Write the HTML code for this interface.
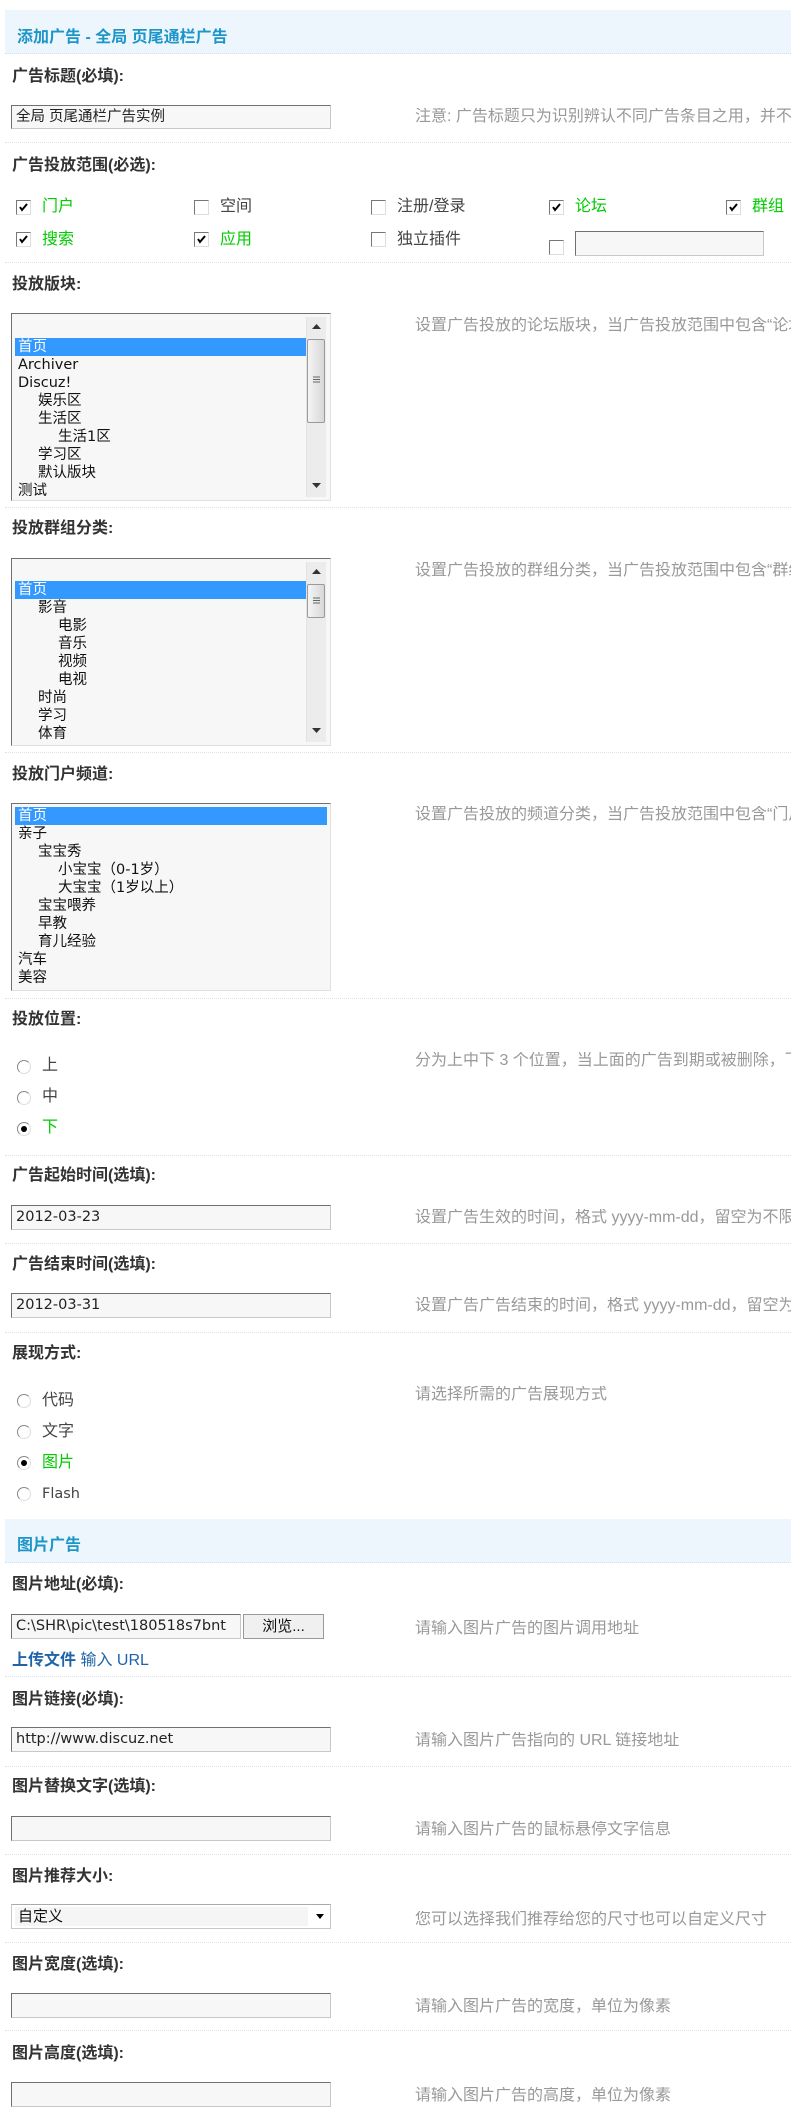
<!DOCTYPE html>
<html><head><meta charset="utf-8">
<style>
html,body{margin:0;padding:0;background:#fff;width:791px;height:2117px;overflow:hidden;position:relative}
body{font-family:"Liberation Sans","Noto Sans CJK SC",sans-serif;}
.a{position:absolute;white-space:nowrap}
.band{position:absolute;left:5px;right:0;background:#eef6fd;border-bottom:1px dotted #cfe0ee}
.band span{position:absolute;left:12px;font-size:16px;font-weight:bold;color:#1c95c9}
.sep{position:absolute;left:5px;right:0;height:0;border-top:1px dotted #d4e3ee}
.lb{position:absolute;left:12px;font-size:16px;font-weight:bold;color:#333;line-height:18px;white-space:nowrap}
.tip{position:absolute;left:415px;width:376px;overflow:hidden;font-size:16px;color:#999;line-height:18px;white-space:nowrap}
.in{position:absolute;left:11px;width:314px;height:23px;background:#f7f7f7;border:1px solid;border-color:#707070 #c8c8c8 #c8c8c8 #707070;font-family:"DejaVu Sans","Noto Sans CJK SC",sans-serif;font-size:14.5px;line-height:23px;color:#222;padding-left:4px;box-sizing:content-box;white-space:nowrap;overflow:hidden}
.lst{position:absolute;left:11px;width:318px;background:#f7f7f7;border:1px solid;border-color:#707070 #e0e0e0 #e0e0e0 #707070;overflow:hidden;font-family:"DejaVu Sans","Noto Sans CJK SC",sans-serif;font-size:14.5px;color:#111}
.it{position:absolute;height:18px;line-height:18px;white-space:nowrap}
.hl{background:#3399ff;color:#fff}
.sb{position:absolute;right:4px;width:19px;background:#ececec;border-left:1px solid #e4e4e4}
.th{position:absolute;left:0;width:18px;background:linear-gradient(90deg,#f4f4f4,#d8d8d8);border:1px solid #9a9a9a;border-radius:2px;box-sizing:border-box}
.cb{position:absolute;width:13px;height:13px;border:1px solid;border-color:#777 #ddd #ddd #777;background:#fff}
.rd{position:absolute;width:12px;height:12px;border-radius:50%;border:1px solid;border-color:#888 #ddd #ddd #888;background:#fff}
.rd.on::after{content:"";position:absolute;left:3px;top:3px;width:6px;height:6px;border-radius:50%;background:#000}
.o{font-size:16px;color:#444;line-height:18px}
.o.g{color:#00cc00}
</style></head><body>

<div class="band" style="top:10px;height:43px"><span style="top:13px">添加广告 - 全局 页尾通栏广告</span></div>

<div class="lb" style="top:68px">广告标题(必填):</div>
<div class="in" style="top:105px;height:22px;line-height:22px;font-size:14.5px;font-family:'Liberation Sans','Noto Sans CJK SC',sans-serif">全局 页尾通栏广告实例</div>
<div class="tip" style="top:108px">注意: 广告标题只为识别辨认不同广告条目之用，并不在广告中显示</div>
<div class="sep" style="top:142px"></div>

<div class="lb" style="top:157px">广告投放范围(必选):</div>
<div class="cb" style="left:16px;top:200px"><svg width="13" height="13"><path d="M3 6 L5 9 L10 3" stroke="#000" stroke-width="2" fill="none"/></svg></div>
<div class="a o g" style="left:42px;top:198px">门户</div>
<div class="cb" style="left:194px;top:200px"></div>
<div class="a o" style="left:220px;top:198px">空间</div>
<div class="cb" style="left:371px;top:200px"></div>
<div class="a o" style="left:397px;top:198px">注册/登录</div>
<div class="cb" style="left:549px;top:200px"><svg width="13" height="13"><path d="M3 6 L5 9 L10 3" stroke="#000" stroke-width="2" fill="none"/></svg></div>
<div class="a o g" style="left:575px;top:198px">论坛</div>
<div class="cb" style="left:726px;top:200px"><svg width="13" height="13"><path d="M3 6 L5 9 L10 3" stroke="#000" stroke-width="2" fill="none"/></svg></div>
<div class="a o g" style="left:752px;top:198px">群组</div>
<div class="cb" style="left:16px;top:232px"><svg width="13" height="13"><path d="M3 6 L5 9 L10 3" stroke="#000" stroke-width="2" fill="none"/></svg></div>
<div class="a o g" style="left:42px;top:231px">搜索</div>
<div class="cb" style="left:194px;top:232px"><svg width="13" height="13"><path d="M3 6 L5 9 L10 3" stroke="#000" stroke-width="2" fill="none"/></svg></div>
<div class="a o g" style="left:220px;top:231px">应用</div>
<div class="cb" style="left:371px;top:232px"></div>
<div class="a o" style="left:397px;top:231px">独立插件</div>
<div class="cb" style="left:549px;top:240px"></div>
<div class="in" style="left:575px;top:231px;width:183px;height:23px"></div>
<div class="sep" style="top:262px"></div>

<div class="lb" style="top:276px">投放版块:</div>
<div class="lst" style="top:313px;height:186px">
 <div class="it hl" style="left:3px;top:24px;width:292px;padding-left:3px;box-sizing:border-box">首页</div>
 <div class="it" style="left:6px;top:42px">Archiver</div>
 <div class="it" style="left:6px;top:60px">Discuz!</div>
 <div class="it" style="left:26px;top:78px">娱乐区</div>
 <div class="it" style="left:26px;top:96px">生活区</div>
 <div class="it" style="left:46px;top:114px">生活1区</div>
 <div class="it" style="left:26px;top:132px">学习区</div>
 <div class="it" style="left:26px;top:150px">默认版块</div>
 <div class="it" style="left:6px;top:168px">测试</div>
 <div class="sb" style="top:3px;height:180px">
  <svg class="a" style="left:5px;top:7px" width="9" height="6"><path d="M0 5 L4.5 0 L9 5Z" fill="#333"/></svg>
  <div class="th" style="top:22px;height:84px"><svg class="a" style="left:5px;top:36px" width="7" height="8"><path d="M0 1H7M0 3.5H7M0 6H7" stroke="#666"/></svg></div>
  <svg class="a" style="left:5px;top:166px" width="9" height="6"><path d="M0 0 L4.5 5 L9 0Z" fill="#333"/></svg>
 </div>
</div>
<div class="tip" style="top:317px">设置广告投放的论坛版块，当广告投放范围中包含“论坛”时有效</div>
<div class="sep" style="top:507px"></div>

<div class="lb" style="top:520px">投放群组分类:</div>
<div class="lst" style="top:558px;height:186px">
 <div class="it hl" style="left:3px;top:22px;width:292px;padding-left:3px;box-sizing:border-box">首页</div>
 <div class="it" style="left:26px;top:40px">影音</div>
 <div class="it" style="left:46px;top:58px">电影</div>
 <div class="it" style="left:46px;top:76px">音乐</div>
 <div class="it" style="left:46px;top:94px">视频</div>
 <div class="it" style="left:46px;top:112px">电视</div>
 <div class="it" style="left:26px;top:130px">时尚</div>
 <div class="it" style="left:26px;top:148px">学习</div>
 <div class="it" style="left:26px;top:166px">体育</div>
 <div class="sb" style="top:3px;height:180px">
  <svg class="a" style="left:5px;top:7px" width="9" height="6"><path d="M0 5 L4.5 0 L9 5Z" fill="#333"/></svg>
  <div class="th" style="top:22px;height:34px"><svg class="a" style="left:5px;top:12px" width="7" height="8"><path d="M0 1H7M0 3.5H7M0 6H7" stroke="#666"/></svg></div>
  <svg class="a" style="left:5px;top:166px" width="9" height="6"><path d="M0 0 L4.5 5 L9 0Z" fill="#333"/></svg>
 </div>
</div>
<div class="tip" style="top:562px">设置广告投放的群组分类，当广告投放范围中包含“群组”时有效</div>
<div class="sep" style="top:752px"></div>

<div class="lb" style="top:766px">投放门户频道:</div>
<div class="lst" style="top:803px;height:186px">
 <div class="it hl" style="left:3px;top:3px;width:312px;padding-left:3px;box-sizing:border-box">首页</div>
 <div class="it" style="left:6px;top:21px">亲子</div>
 <div class="it" style="left:26px;top:39px">宝宝秀</div>
 <div class="it" style="left:46px;top:57px">小宝宝（0-1岁）</div>
 <div class="it" style="left:46px;top:75px">大宝宝（1岁以上）</div>
 <div class="it" style="left:26px;top:93px">宝宝喂养</div>
 <div class="it" style="left:26px;top:111px">早教</div>
 <div class="it" style="left:26px;top:129px">育儿经验</div>
 <div class="it" style="left:6px;top:147px">汽车</div>
 <div class="it" style="left:6px;top:165px">美容</div>
</div>
<div class="tip" style="top:806px">设置广告投放的频道分类，当广告投放范围中包含“门户”时有效</div>
<div class="sep" style="top:998px"></div>

<div class="lb" style="top:1011px">投放位置:</div>
<div class="rd" style="left:17px;top:1060px"></div><div class="a o" style="left:42px;top:1057px">上</div>
<div class="rd" style="left:17px;top:1091px"></div><div class="a o" style="left:42px;top:1088px">中</div>
<div class="rd on" style="left:17px;top:1122px"></div><div class="a o g" style="left:42px;top:1119px">下</div>
<div class="tip" style="top:1052px">分为上中下 3 个位置，当上面的广告到期或被删除，下面的广告会自动上移</div>
<div class="sep" style="top:1155px"></div>

<div class="lb" style="top:1167px">广告起始时间(选填):</div>
<div class="in" style="top:1205px">2012-03-23</div>
<div class="tip" style="top:1209px">设置广告生效的时间，格式 yyyy-mm-dd，留空为不限制开始时间</div>
<div class="sep" style="top:1243px"></div>

<div class="lb" style="top:1256px">广告结束时间(选填):</div>
<div class="in" style="top:1293px">2012-03-31</div>
<div class="tip" style="top:1297px">设置广告广告结束的时间，格式 yyyy-mm-dd，留空为不限制结束时间</div>
<div class="sep" style="top:1332px"></div>

<div class="lb" style="top:1345px">展现方式:</div>
<div class="rd" style="left:17px;top:1394px"></div><div class="a o" style="left:42px;top:1392px">代码</div>
<div class="rd" style="left:17px;top:1425px"></div><div class="a o" style="left:42px;top:1423px">文字</div>
<div class="rd on" style="left:17px;top:1456px"></div><div class="a o g" style="left:42px;top:1454px">图片</div>
<div class="rd" style="left:17px;top:1487px"></div><div class="a o" style="left:42px;top:1485px;font-family:'DejaVu Sans',sans-serif;font-size:14.5px">Flash</div>
<div class="tip" style="top:1386px">请选择所需的广告展现方式</div>

<div class="band" style="top:1519px;height:43px"><span style="top:12px">图片广告</span></div>

<div class="lb" style="top:1576px">图片地址(必填):</div>
<div class="in" style="top:1614px;width:224px">C:\SHR\pic\test\180518s7bnt</div>
<div class="a" style="left:243px;top:1614px;width:79px;height:23px;border:1px solid #999;background:#f0f0f0;font-size:15px;line-height:23px;text-align:center;color:#111">浏览...</div>
<div class="tip" style="top:1620px">请输入图片广告的图片调用地址</div>
<div class="a" style="left:12px;top:1652px;font-size:16px;line-height:18px;color:#1f64a8"><b>上传文件</b> 输入 URL</div>
<div class="sep" style="top:1676px"></div>

<div class="lb" style="top:1691px">图片链接(必填):</div>
<div class="in" style="top:1727px">http://www.discuz.net</div>
<div class="tip" style="top:1732px">请输入图片广告指向的 URL 链接地址</div>
<div class="sep" style="top:1766px"></div>

<div class="lb" style="top:1778px">图片替换文字(选填):</div>
<div class="in" style="top:1816px"></div>
<div class="tip" style="top:1821px">请输入图片广告的鼠标悬停文字信息</div>
<div class="sep" style="top:1854px"></div>

<div class="lb" style="top:1868px">图片推荐大小:</div>
<div class="a" style="left:11px;top:1904px;width:318px;height:23px;border:1px solid #c8c8c8;border-top-color:#aaa;background:#fff">
 <div class="a" style="left:3px;top:2px;width:290px;height:19px;background:#f5f5f5;font-size:15px;line-height:19px;padding-left:3px;color:#111">自定义</div>
 <svg class="a" style="left:304px;top:9px" width="8" height="5"><path d="M0 0H8L4 5Z" fill="#000"/></svg>
</div>
<div class="tip" style="top:1911px">您可以选择我们推荐给您的尺寸也可以自定义尺寸</div>
<div class="sep" style="top:1942px"></div>

<div class="lb" style="top:1956px">图片宽度(选填):</div>
<div class="in" style="top:1993px"></div>
<div class="tip" style="top:1998px">请输入图片广告的宽度，单位为像素</div>
<div class="sep" style="top:2030px"></div>

<div class="lb" style="top:2045px">图片高度(选填):</div>
<div class="in" style="top:2082px"></div>
<div class="tip" style="top:2087px">请输入图片广告的高度，单位为像素</div>

</body></html>
